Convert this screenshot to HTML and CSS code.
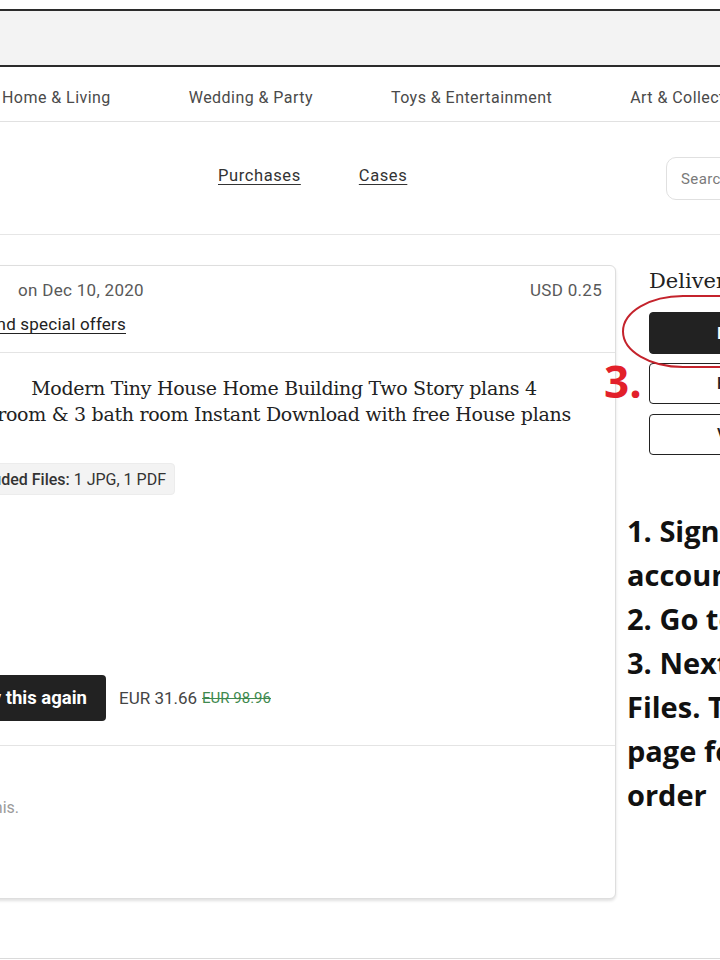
FILE: index.html
```html
<!DOCTYPE html>
<html>
<head>
<meta charset="utf-8">
<link rel="stylesheet" href="styles.css">
</head>
<body>
<div class="page">
  <div class="chrome"></div>
  <nav class="catnav">
    <span>Home &amp; Living</span>
    <span>Wedding &amp; Party</span>
    <span>Toys &amp; Entertainment</span>
    <span>Art &amp; Collectibles</span>
  </nav>
  <div class="subnav">
    <div class="sublinks">
      <a class="sublink">Purchases</a>
      <a class="sublink">Cases</a>
    </div>
    <div class="search">Search your purchases</div>
  </div>
  <main class="main">
    <section class="card">
      <div class="sec sec-head">
        <div class="row1">
          <span class="shop">Purchased from TinyHousePlans</span>
          <span class="date">on Dec 10, 2020</span>
          <span class="usd">USD 0.25</span>
        </div>
        <div class="row2"><a class="offers">Get shop updates and special offers</a></div>
      </div>
      <div class="sec sec-item">
        <div class="thumb"></div>
        <div class="details">
          <h2 class="title">
            <span class="tline">Modern Tiny House Home Building Two Story plans 4</span>
            <span class="tline">room &amp; 3 bath room Instant Download with free House plans</span>
          </h2>
          <div class="files-row">
            <div class="files"><b>Included Files:</b> 1 JPG, 1 PDF</div>
          </div>
          <div class="buy-row">
            <div class="buy-wrap"><button class="buy">Buy this again</button></div>
            <span class="price">EUR 31.66</span>
            <s class="old">EUR 98.96</s>
          </div>
        </div>
      </div>
      <div class="sec sec-review">
        <div class="review-note">You haven't reviewed this.</div>
      </div>
    </section>
    <aside class="aside">
      <h3 class="deliv">Delivered on Dec 10</h3>
      <button class="abtn abtn-dark">Download Files</button>
      <button class="abtn">Help with order</button>
      <button class="abtn">View receipt</button>
      <div class="steps">
        <div>1. Sign in to your</div>
        <div>account</div>
        <div>2. Go to Purchases</div>
        <div>3. Next click Download</div>
        <div>Files. The download</div>
        <div>page for your</div>
        <div>order</div>
      </div>
    </aside>
  </main>
  <footer class="foot"></footer>
  <svg class="circle" width="320" height="90" viewBox="0 0 320 90">
    <rect x="2" y="2" width="330" height="71" rx="60" ry="36" fill="none" stroke="#c4232c" stroke-width="2"/>
  </svg>
  <div class="num3">3.</div>
</div>
</body>
</html>
```
FILE: styles.css
```css
* { box-sizing: border-box; }
html, body { margin: 0; padding: 0; background: #fff; }
body { width: 720px; height: 960px; overflow: hidden; font-family: Roboto, "Liberation Sans", sans-serif; color: #222; }
.page { position: relative; width: 720px; height: 960px; overflow: hidden; }

.chrome { margin-top: 9px; height: 58px; background: #f3f3f3; border-top: 2px solid #2b2b2b; border-bottom: 2px solid #2b2b2b; }

.catnav { height: 55px; border-bottom: 1px solid #e1e1e1; display: flex; align-items: center; gap: 78px; padding: 6px 0 0 2px; white-space: nowrap; font-size: 16px; letter-spacing: 0.45px; color: #4a4a4a; }

.subnav { height: 113px; border-bottom: 1px solid #e6e6e6; display: flex; align-items: center; white-space: nowrap; }
.sublinks { flex: none; width: 666px; display: flex; gap: 58px; padding-left: 218px; margin-top: -5px; }
.sublink { font-size: 16.5px; color: #333; text-decoration: underline; text-underline-offset: 3px; letter-spacing: 0.6px; }
.search { flex: none; width: 260px; height: 43px; border: 1px solid #e0e0e0; border-radius: 10px; padding: 12px 14px; font-size: 15px; color: #7a7a7a; letter-spacing: 0.4px; }

.main { display: flex; align-items: flex-start; gap: 11px; padding: 30px 0 59px; margin-left: -240px; }

.card { flex: none; width: 856px; border: 1px solid #dedede; border-radius: 6px; box-shadow: 0 2px 3px rgba(0,0,0,0.12); background: #fff; }
.sec { border-bottom: 1px solid #e4e4e4; }
.sec:last-child { border-bottom: none; }

.sec-head { padding: 12px 13px 16px 16px; }
.row1 { display: flex; align-items: center; height: 24px; font-size: 17px; color: #595959; letter-spacing: 0.3px; white-space: nowrap; }
.shop { width: 221px; overflow: hidden; text-align: right; }
.date { margin-left: 20px; }
.usd { margin-left: auto; }
.row2 { margin-top: 10px; width: 349px; text-align: right; height: 24px; line-height: 24px; white-space: nowrap; }
.offers { font-size: 17px; color: #222; text-decoration: underline; text-underline-offset: 3px; letter-spacing: 0.2px; }

.sec-item { display: flex; padding: 22px 0 24px; }
.thumb { flex: none; width: 180px; }
.details { flex: none; width: 676px; }
.title { margin: 0 -10px 0 0; font-family: "DejaVu Serif", serif; font-weight: normal; font-size: 19px; line-height: 26px; text-align: center; color: #222; letter-spacing: -0.3px; }
.tline { display: block; white-space: nowrap; }
.files-row { width: 234px; display: flex; justify-content: flex-end; margin-top: 36px; }
.files { height: 32px; padding: 6px 8px; background: #f3f3f3; border: 1px solid #ececec; border-radius: 4px; font-size: 16px; color: #333; white-space: nowrap; }
.files b { font-weight: 500; }
.buy-row { display: flex; align-items: center; margin-top: 180px; white-space: nowrap; }
.buy-wrap { width: 165px; display: flex; justify-content: flex-end; }
.buy { height: 46px; padding: 0 19px 0 16px; border: none; border-radius: 4px; background: #222; color: #fff; font-family: Roboto, "Liberation Sans", sans-serif; font-weight: 700; font-size: 18.5px; white-space: nowrap; }
.price { margin-left: 13px; font-size: 17px; color: #444; }
.old { margin-left: 5px; font-size: 15px; color: #3f8a4f; }

.sec-review { padding: 50px 0 78px; }
.review-note { width: 258px; text-align: right; font-size: 16px; color: #9a9a9a; line-height: 24px; white-space: nowrap; overflow: hidden; }

.aside { flex: none; width: 320px; }
.deliv { margin: 2px 0 17px; padding-left: 22px; font-family: "DejaVu Serif", serif; font-weight: normal; font-size: 21px; line-height: 28px; color: #222; white-space: nowrap; }
.abtn { display: block; margin-left: 22px; width: 280px; height: 41px; margin-bottom: 10px; padding: 0 0 0 67px; text-align: left; border: 1px solid #222; border-radius: 4px; background: #fff; color: #222; font-family: Roboto, "Liberation Sans", sans-serif; font-size: 16px; font-weight: 500; white-space: nowrap; }
.abtn-dark { height: 42px; margin-bottom: 9px; background: #222; color: #fff; }
.steps { margin-top: 54px; font-family: "Open Sans", "Liberation Sans", sans-serif; font-weight: 700; font-size: 29px; line-height: 44px; color: #111; white-space: nowrap; }

.foot { border-top: 1px solid #dadada; height: 20px; }

.circle { position: absolute; left: 621px; top: 294px; overflow: visible; }
.num3 { position: absolute; left: 604px; top: 359px; font-family: "Open Sans", "Liberation Sans", sans-serif; font-weight: 700; font-size: 44px; line-height: 44px; color: #e2202a; }
```
